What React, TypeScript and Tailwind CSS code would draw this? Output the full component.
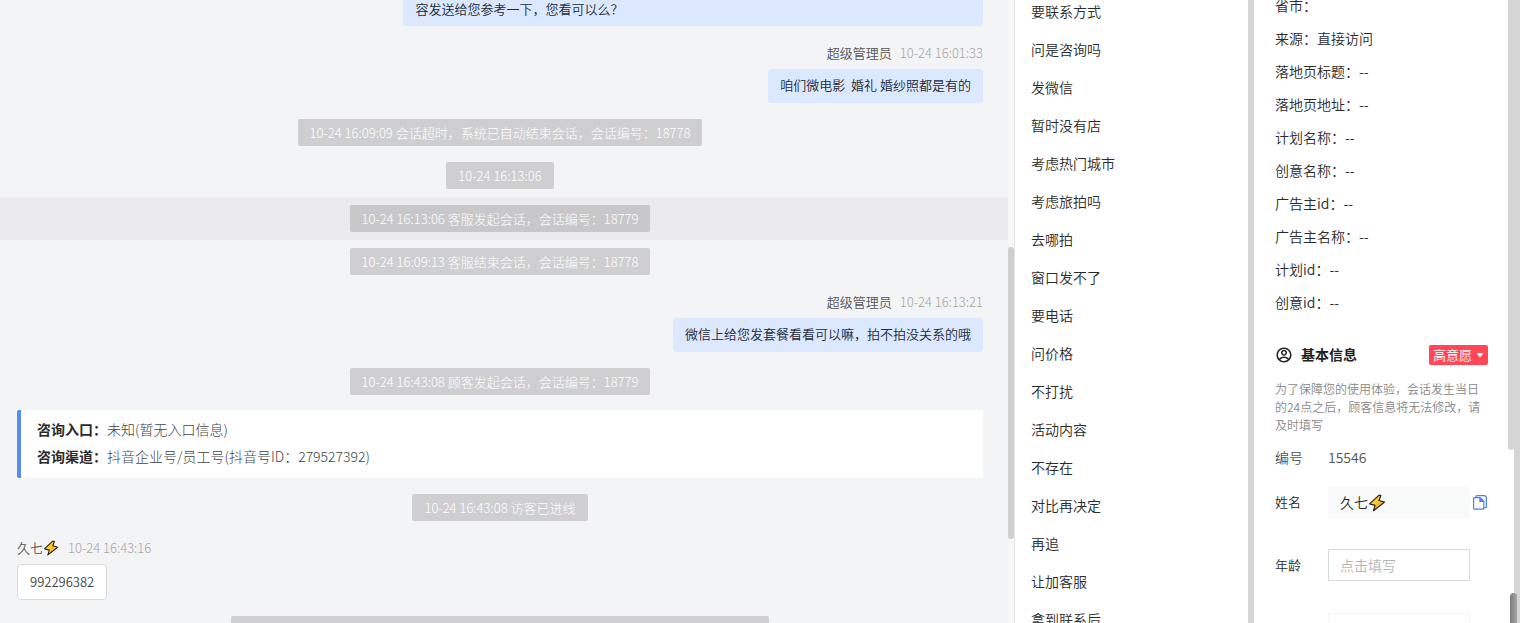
import { RiAccountCircleLine } from "react-icons/ri";
import type { ReactNode } from "react";

const quickReplies = [
  "要联系方式", "问是咨询吗", "发微信", "暂时没有店", "考虑热门城市", "考虑旅拍吗", "去哪拍", "窗口发不了", "要电话",
  "问价格", "不打扰", "活动内容", "不存在", "对比再决定", "再追", "让加客服", "拿到联系后",
];

const sourceInfo: [string, string][] = [
  ["省市", ""], ["来源", "直接访问"], ["落地页标题", "--"], ["落地页地址", "--"], ["计划名称", "--"],
  ["创意名称", "--"], ["广告主id", "--"], ["广告主名称", "--"], ["计划id", "--"], ["创意id", "--"],
];

function Bolt({ className }: { className: string }) {
  return (
    <svg viewBox="0 0 16 16" className={className} aria-hidden="true">
      <path d="M9.6 1.2 1.4 8.8l4.9 1.3-1.4 4.8 9.8-7.7-4.9-1.4 1.6-4.6z" fill="#fdc735" stroke="#2a221b" strokeWidth="1.1" strokeLinejoin="round" />
      <path d="M8.8 6.6 12.9 7.5 6.4 12.6l1.1-3.4z" fill="#f5a623" opacity=".45" />
    </svg>
  );
}

function CopyIcon() {
  return (
    <svg viewBox="0 0 14 15" className="h-[15px] w-[14px]" fill="none" stroke="#4f7ff0" strokeWidth="1.2" strokeLinejoin="round" aria-hidden="true">
      <path d="M3 2.4V1.5c0-.5.3-.9.9-.9h7c1.4 0 2.5 1.1 2.5 2.5v8.6c0 .6-.4.9-.9.9h-1.4" />
      <path d="M1.5 2.6h5.4l3.9 3.7v7c0 .6-.3.9-.9.9H1.5c-.6 0-.9-.3-.9-.9V3.5c0-.6.3-.9.9-.9z" />
      <path d="M6.9 2.8v3.6h3.7z" fill="#4f7ff0" />
    </svg>
  );
}

function Notice({ children, active }: { children?: ReactNode; active?: boolean }) {
  return (
    <div className={active ? "flex justify-center bg-[#ebebed] py-2 pr-[25px] pl-[17px]" : "flex justify-center py-2 pr-[25px] pl-[17px]"}>
      <p className={`h-[27px] rounded-xs px-3 text-[13px] leading-[27px] font-light whitespace-pre text-white ${active ? "bg-[#c8c8ca]" : "bg-[#cfcfd1]"}`}>
        {children}
      </p>
    </div>
  );
}

function AgentMessage({ time, children }: { time: string; children: ReactNode }) {
  return (
    <div className="flex flex-col items-end py-2 pr-[25px] pl-[17px] text-[13px]">
      <div className="mb-[5px] flex gap-2 leading-[22px]">
        <span className="text-[#555]">超级管理员</span>
        <time className="font-light text-[#a6a6a6]">{time}</time>
      </div>
      <p className="rounded-sm bg-[#dce8fe] px-3 pb-[2px] leading-[32px] whitespace-pre text-[#222838]">{children}</p>
    </div>
  );
}

export default function App() {
  return (
    <div className="flex h-screen overflow-hidden bg-white font-['Noto_Sans_CJK_SC',sans-serif] text-sm font-[350] text-[#2b2b2b]">
      <main className="flex min-w-0 flex-1 bg-[#f3f4f6]">
        <div className="min-w-0 flex-1 overflow-hidden">
          <div className="flex justify-end pr-[25px] pb-2 pl-[17px]">
            <p className="w-3/5 rounded-b-sm bg-[#dce8fe] px-3 pb-2 text-[13px] leading-[18px] text-[#222838]">容发送给您参考一下，您看可以么？</p>
          </div>
          <AgentMessage time="10-24 16:01:33">咱们微电影  婚礼 婚纱照都是有的</AgentMessage>
          <Notice>10-24 16:09:09 会话超时，系统已自动结束会话，会话编号：18778</Notice>
          <Notice>10-24 16:13:06</Notice>
          <Notice active>10-24 16:13:06 客服发起会话，会话编号：18779</Notice>
          <Notice>10-24 16:09:13 客服结束会话，会话编号：18778</Notice>
          <AgentMessage time="10-24 16:13:21">微信上给您发套餐看看可以嘛，拍不拍没关系的哦</AgentMessage>
          <Notice>10-24 16:43:08 顾客发起会话，会话编号：18779</Notice>
          <div className="pt-[7px] pr-[25px] pb-2 pl-[17px]">
            <dl className="rounded-xs border-l-4 border-[#568df0] bg-white pt-[6px] pb-2 pl-4 leading-[27px]">
              <div className="flex">
                <dt className="font-bold">咨询入口：</dt>
                <dd className="font-light text-[#444]">未知(暂无入口信息)</dd>
              </div>
              <div className="flex">
                <dt className="font-bold">咨询渠道：</dt>
                <dd className="font-light text-[#444]">抖音企业号/员工号(抖音号ID：279527392)</dd>
              </div>
            </dl>
          </div>
          <Notice>10-24 16:43:08 访客已进线</Notice>
          <div className="flex flex-col items-start py-2 pr-[25px] pl-[17px] text-[13px]">
            <div className="mb-[5px] flex items-center leading-[22px]">
              <span className="text-[#555]">久七</span>
              <Bolt className="size-4" />
              <time className="ml-[9px] font-light text-[#a6a6a6]">10-24 16:43:16</time>
            </div>
            <p className="rounded-sm border border-[#d9d9d9] bg-white px-3 leading-[34px] text-[#444]">992296382</p>
          </div>
          <div className="flex justify-center py-2 pr-[25px] pl-[17px]">
            <div className="h-[27px] w-[538px] rounded-xs bg-[#cfcfd1]" />
          </div>
        </div>
        <div className="w-[6px] shrink-0 bg-[#f7f7f8] pt-[247px]">
          <div className="h-[292px] rounded-full bg-[#cfcfcf]" />
        </div>
      </main>

      <aside className="w-[234px] shrink-0 overflow-hidden border-l border-[#e6e6e6]">
        <ul className="-mt-2 pl-4">
          {quickReplies.map((reply) => (
            <li key={reply} className="leading-[38px]">{reply}</li>
          ))}
        </ul>
      </aside>
      <div className="w-[6px] shrink-0 bg-[#d5d5d5]" />

      <aside className="flex w-[266px] shrink-0">
        <div className="min-w-0 flex-1 overflow-hidden pr-5 pl-[21px]">
          <ul className="-mt-[11px]">
            {sourceInfo.map(([label, value]) => (
              <li key={label} className="leading-[33px]">{label}：{value}</li>
            ))}
          </ul>
          <div className="mt-6 flex h-6 items-center">
            <RiAccountCircleLine className="mr-2 size-[18px] text-[#222]" aria-hidden="true" />
            <h2 className="flex-1 pb-[2px] font-bold text-[#222]">基本信息</h2>
            <button type="button" className="flex h-5 items-center gap-1 rounded-xs bg-[#ff4757] px-1 text-[13px] text-white">
              高意愿
              <svg viewBox="0 0 8 5" className="h-[5px] w-2" aria-hidden="true"><path d="M.5 0h7L4 4.6z" fill="white" /></svg>
            </button>
          </div>
          <p className="mt-[13px] text-xs leading-[18px] text-[#888]">为了保障您的使用体验，会话发生当日的24点之后，顾客信息将无法修改，请及时填写</p>
          <div className="mt-[11px] flex leading-6 text-[#555]">
            <span className="w-[53px]">编号</span>
            <span>15546</span>
          </div>
          <div className="mt-[17px] flex items-center">
            <label htmlFor="name" className="w-[53px] text-[13px]">姓名</label>
            <div className="relative w-[142px]">
              <input id="name" defaultValue="久七" readOnly className="h-8 w-full border border-[#fafafa] bg-[#f9fafa] px-[11px]" />
              <Bolt className="absolute top-2 left-10 size-[18px]" />
            </div>
            <button type="button" aria-label="复制" className="ml-[3px]"><CopyIcon /></button>
          </div>
          <div className="mt-[31px] flex items-center">
            <label htmlFor="age" className="w-[53px] text-[13px]">年龄</label>
            <input id="age" placeholder="点击填写" className="h-8 w-[142px] border border-[#d9d9d9] px-[11px] placeholder:text-[#b5b5b5]" />
          </div>
          <div className="mt-8 ml-[53px] h-8 w-[142px] border border-[#f5f5f5]" />
        </div>
        <div className="w-[6px] shrink-0">
          <div className="h-[450px] rounded-b-full bg-[#d5d5d5]" />
        </div>
        <div className="relative w-[6px] shrink-0 bg-[#d5d5d5]">
          <div className="absolute top-[593px] -left-1 h-20 w-[7px] rounded-full bg-linear-to-r from-[#7c7c7c] to-[#a6a6a6]" />
        </div>
      </aside>
    </div>
  );
}
